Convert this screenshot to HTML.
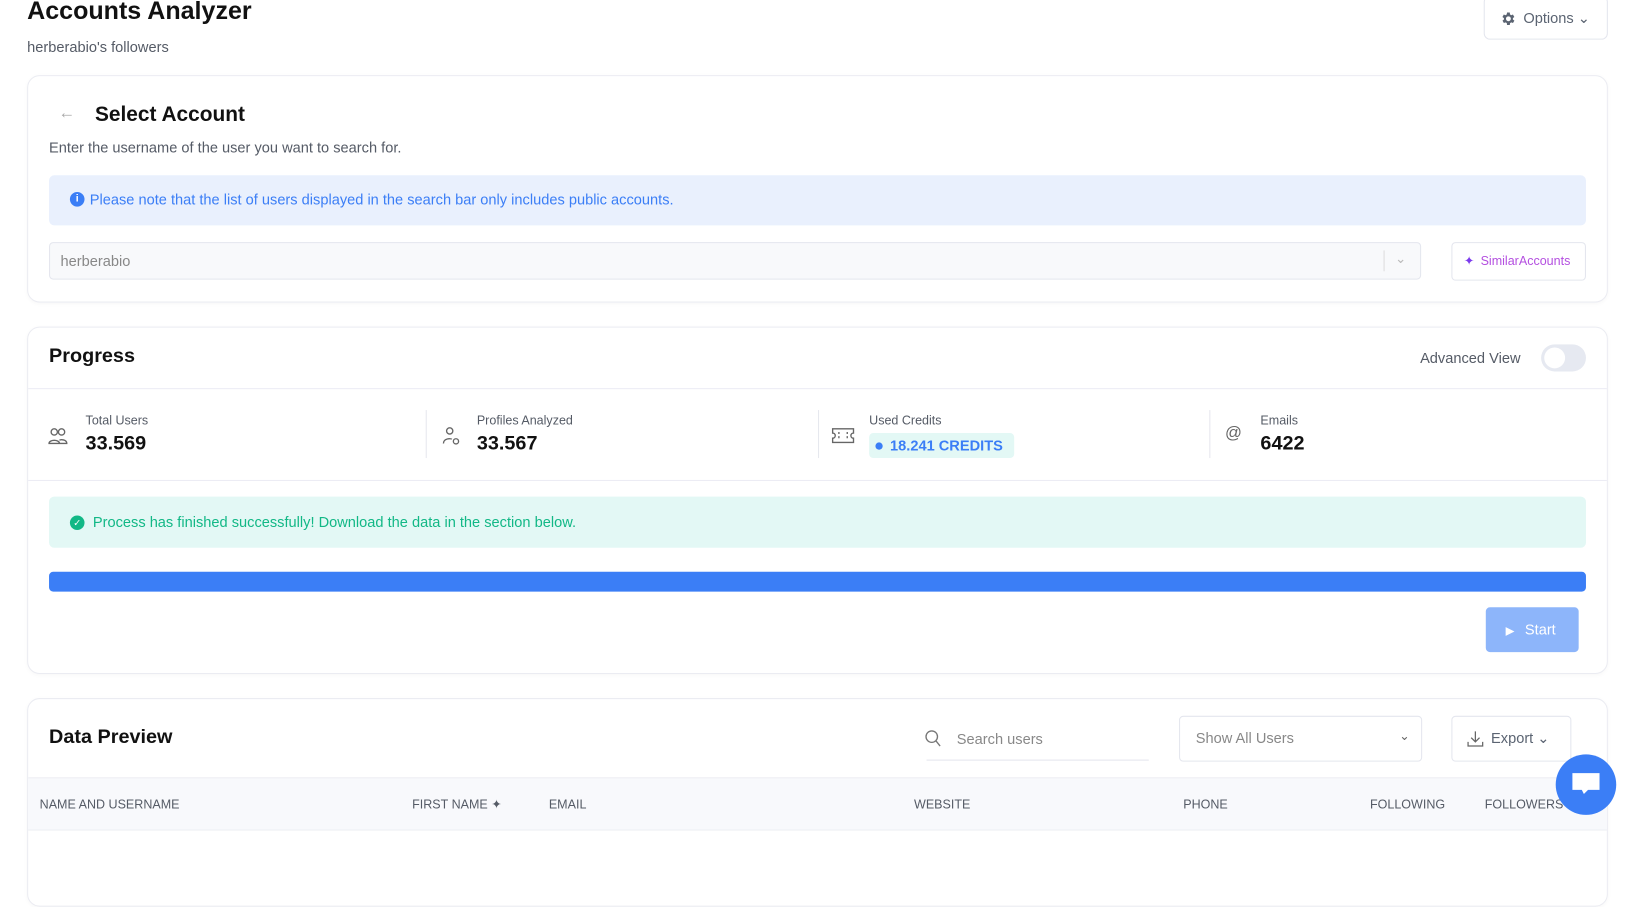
<!DOCTYPE html>
<html><head><meta charset="utf-8"><style>
*{box-sizing:border-box;margin:0;padding:0}
body{width:1636px;height:831px;background:#fff;font-family:"Liberation Sans",sans-serif;position:relative;overflow:hidden;color:#111}
#w{position:absolute;left:0;top:0;width:1568px;height:800px;transform:scale(1.0434);transform-origin:0 0}
.a{position:absolute}
.card{position:absolute;left:26px;width:1515px;border:1px solid #ebecf2;border-radius:12px;background:#fff;box-shadow:0 1px 4px rgba(0,0,0,.03)}
.lbl{font-size:13px;color:#555b66}
.num{font-size:19px;font-weight:bold;color:#111}
.th{position:absolute;top:764px;font-size:12px;color:#555b66}
</style></head><body><div id="w">
<div class="a" style="left:26px;top:-3px;font-size:24px;font-weight:bold">Accounts Analyzer</div>
<div class="a" style="left:26px;top:37px;font-size:14px;color:#555b66">herberabio's followers</div>
<div class="a" style="left:1422px;top:-4px;width:119px;height:42px;border:1px solid #e4e6ee;border-radius:6px;font-size:14px;color:#5b6472">
<svg class="a" style="left:14px;top:13px" width="16" height="16" viewBox="0 0 24 24"><path fill="#5b6472" d="M19.4 13a7.5 7.5 0 000-2l2.1-1.6-2-3.5-2.5 1a7.4 7.4 0 00-1.7-1L15 3h-4l-.4 2.9a7.4 7.4 0 00-1.7 1l-2.5-1-2 3.5L6.6 11a7.5 7.5 0 000 2l-2.1 1.6 2 3.5 2.5-1a7.4 7.4 0 001.7 1L11 21h4l.4-2.9a7.4 7.4 0 001.7-1l2.5 1 2-3.5zM13 15.5a3.5 3.5 0 110-7 3.5 3.5 0 010 7z"/></svg>
<span class="a" style="left:37px;top:12px">Options ⌄</span></div>

<div class="card" style="top:72px;height:218px"></div>
<div class="a" style="left:56px;top:100px;font-size:16px;color:#aaa">←</div>
<div class="a" style="left:91px;top:99px;font-size:20px;font-weight:bold">Select Account</div>
<div class="a" style="left:47px;top:133px;font-size:14px;color:#555b66">Enter the username of the user you want to search for.</div>
<div class="a" style="left:47px;top:168px;width:1473px;height:48px;background:#e9f0fd;border-radius:5px"></div>
<div class="a" style="left:67px;top:184px;width:14px;height:14px;border-radius:50%;background:#3b7ef6;color:#fff;font-size:10px;font-weight:bold;text-align:center;line-height:14px">i</div>
<div class="a" style="left:86px;top:183px;font-size:14px;color:#3b7ef6">Please note that the list of users displayed in the search bar only includes public accounts.</div>
<div class="a" style="left:47px;top:232px;width:1315px;height:36px;background:#f8f9fb;border:1px solid #e4e6ee;border-radius:4px"></div>
<div class="a" style="left:58px;top:242px;font-size:14px;color:#888">herberabio</div>
<div class="a" style="left:1326px;top:240px;width:1px;height:20px;background:#ddd"></div>
<div class="a" style="left:1337px;top:240px;font-size:13px;color:#bbb">⌄</div>
<div class="a" style="left:1391px;top:232px;width:129px;height:37px;border:1px solid #e4e6ee;border-radius:4px"></div>
<div class="a" style="left:1403px;top:243px;font-size:12px;color:#7c3aed">✦</div>
<div class="a" style="left:1419px;top:243px;font-size:12px;color:#b44fe0">SimilarAccounts</div>

<div class="card" style="top:313px;height:333px"></div>
<div class="a" style="left:47px;top:331px;font-size:19px;font-weight:bold">Progress</div>
<div class="a" style="left:1361px;top:335px;font-size:14px;color:#555b66">Advanced View</div>
<div class="a" style="left:1477px;top:330px;width:43px;height:26px;border-radius:13px;background:#e6e9f1"><div class="a" style="left:3px;top:3px;width:20px;height:20px;border-radius:50%;background:#fff"></div></div>
<div class="a" style="left:27px;top:372px;width:1513px;height:1px;background:#ececf4"></div>
<div class="a" style="left:27px;top:460px;width:1513px;height:1px;background:#ececf4"></div>
<div class="a" style="left:408px;top:393px;width:1px;height:46px;background:#e6e7ee"></div>
<div class="a" style="left:784px;top:393px;width:1px;height:46px;background:#e6e7ee"></div>
<div class="a" style="left:1159px;top:393px;width:1px;height:46px;background:#e6e7ee"></div>
<svg class="a" style="left:46px;top:409px" width="20" height="18" viewBox="0 0 20 18" fill="none" stroke="#666" stroke-width="1.3"><circle cx="6" cy="5" r="3"/><circle cx="13" cy="5" r="3"/><path d="M1 16c0-4 10-4 10 0zM9 16h9c0-4-6-4-7-3"/></svg>
<div class="a lbl" style="left:82px;top:396px;font-size:12px">Total Users</div>
<div class="a num" style="left:82px;top:415px">33.569</div>
<svg class="a" style="left:424px;top:408px" width="18" height="20" viewBox="0 0 18 20" fill="none" stroke="#666" stroke-width="1.3"><circle cx="7" cy="5" r="3"/><path d="M1 17c0-5 7-5 8-4"/><circle cx="13" cy="15" r="2.5"/></svg>
<div class="a lbl" style="left:457px;top:396px;font-size:12px">Profiles Analyzed</div>
<div class="a num" style="left:457px;top:415px">33.567</div>
<svg class="a" style="left:797px;top:410px" width="22" height="15" viewBox="0 0 22 15" fill="none" stroke="#666" stroke-width="1.3"><path d="M1 1h20v4a2.5 2.5 0 000 5v4H1v-4a2.5 2.5 0 000-5z"/><path d="M7 4v7M15 4v7" stroke-dasharray="2 2"/></svg>
<div class="a lbl" style="left:833px;top:396px;font-size:12px">Used Credits</div>
<div class="a" style="left:833px;top:415px;width:139px;height:24px;background:#e3f8f5;border-radius:4px;font-size:14px;font-weight:bold;color:#3b7ef6;line-height:24px;padding-left:6px"><span style="display:inline-block;width:7px;height:7px;border-radius:50%;background:#3b7ef6;margin-right:7px;vertical-align:1px"></span>18.241 CREDITS</div>
<div class="a" style="left:1174px;top:407px;font-size:16px;color:#666">@</div>
<div class="a lbl" style="left:1208px;top:396px;font-size:12px">Emails</div>
<div class="a num" style="left:1208px;top:415px">6422</div>
<div class="a" style="left:47px;top:476px;width:1473px;height:49px;background:#e3f8f5;border-radius:5px"></div>
<div class="a" style="left:67px;top:494px;width:14px;height:14px;border-radius:50%;background:#12b886;color:#fff;font-size:9px;text-align:center;line-height:14px">✓</div>
<div class="a" style="left:89px;top:492px;font-size:14px;color:#12b886">Process has finished successfully! Download the data in the section below.</div>
<div class="a" style="left:47px;top:548px;width:1473px;height:19px;background:#3b7ef6;border-radius:4px"></div>
<div class="a" style="left:1424px;top:582px;width:89px;height:43px;background:#8db5fa;border-radius:4px;color:#fff;font-size:14px;line-height:43px"><span style="margin-left:19px;font-size:11px">▶</span><span style="margin-left:10px">Start</span></div>

<div class="card" style="top:669px;height:200px"></div>
<div class="a" style="left:47px;top:696px;font-size:19px;font-weight:bold">Data Preview</div>
<svg class="a" style="left:886px;top:699px" width="16" height="17" viewBox="0 0 16 17" fill="none" stroke="#777" stroke-width="1.3"><circle cx="7" cy="7" r="5.5"/><path d="M11 11l4 5"/></svg>
<div class="a" style="left:917px;top:700px;font-size:14px;color:#888">Search users</div>
<div class="a" style="left:888px;top:728px;width:213px;height:1px;background:#e4e6ee"></div>
<div class="a" style="left:1130px;top:686px;width:233px;height:44px;border:1px solid #e4e6ee;border-radius:4px"></div>
<div class="a" style="left:1146px;top:699px;font-size:14px;color:#888">Show All Users</div>
<div class="a" style="left:1341px;top:698px;font-size:12px;color:#666">⌄</div>
<div class="a" style="left:1391px;top:686px;width:115px;height:44px;border:1px solid #e4e6ee;border-radius:4px"></div>
<svg class="a" style="left:1406px;top:700px" width="16" height="16" viewBox="0 0 16 16" fill="none" stroke="#666" stroke-width="1.2"><path d="M8 1v10M4 7l4 4 4-4M1 11v4h14v-4"/></svg>
<div class="a" style="left:1429px;top:699px;font-size:14px;color:#5b6472">Export ⌄</div>
<div class="a" style="left:27px;top:745px;width:1513px;height:51px;background:#f8f9fc;border-top:1px solid #eceef3;border-bottom:1px solid #eceef3"></div>
<div class="th" style="left:38px">NAME AND USERNAME</div>
<div class="th" style="left:395px">FIRST NAME ✦</div>
<div class="th" style="left:526px">EMAIL</div>
<div class="th" style="left:876px">WEBSITE</div>
<div class="th" style="left:1134px">PHONE</div>
<div class="th" style="left:1313px">FOLLOWING</div>
<div class="th" style="left:1423px">FOLLOWERS</div>
<div class="a" style="left:1491px;top:723px;width:58px;height:58px;border-radius:50%;background:#3b7ef6"></div>
<svg class="a" style="left:1505px;top:739px" width="30" height="28" viewBox="0 0 30 28"><path fill="#fff" d="M2 2h26v16H17l-4 4-2-4H2z"/></svg>
</div></body></html>
